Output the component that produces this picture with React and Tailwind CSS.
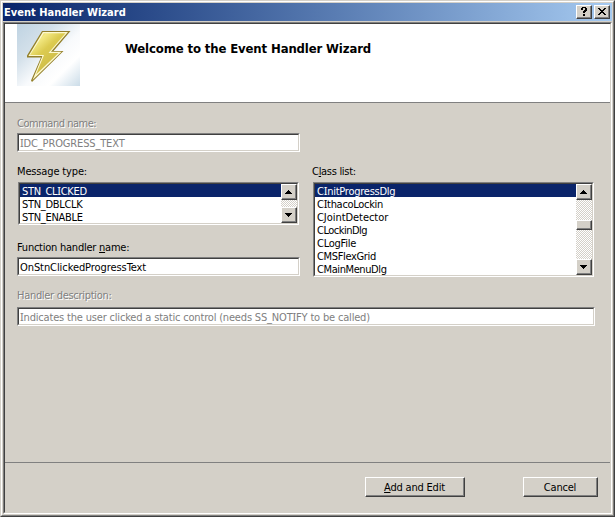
const raised =
  "border border-t-white border-l-white border-r-[#404040] border-b-[#404040] bg-[#d4d0c8]";
const raisedInner = "h-full w-full border-r border-b border-[#808080] flex items-center justify-center";
const sunken = "border border-t-[#808080] border-l-[#808080] border-r-white border-b-white";
const sunkenInner =
  "h-full w-full border border-t-[#404040] border-l-[#404040] border-r-[#d4d0c8] border-b-[#d4d0c8]";

function Serifed({ text }) {
  return text.split(/(I)/).map((part, i) =>
    part === "I" ? (
      <span key={i} className="font-['Noto_Sans',sans-serif] leading-[0] [font-stretch:normal]">
        I
      </span>
    ) : (
      part
    ),
  );
}

function TitleButton({ children, className = "" }) {
  return (
    <button className={`block h-[14px] w-4 ${raised} ${className}`}>
      <span className={raisedInner}>{children}</span>
    </button>
  );
}

function PushButton({ children, className = "" }) {
  return (
    <button className={`block h-5 ${raised} ${className}`}>
      <span className={`${raisedInner} pt-px leading-[13px]`}>{children}</span>
    </button>
  );
}

function Field({ value, disabled, className = "" }) {
  return (
    <div className={`h-[19px] ${sunken}`}>
      <div className={`${sunkenInner} bg-white pt-[2px] pl-px ${disabled ? "text-[#808080]" : "text-black"}`}>
        <span className={`block leading-[13px] ${className}`}>
          <Serifed text={value} />
        </span>
      </div>
    </div>
  );
}

function Label({ children, disabled, className = "" }) {
  return (
    <div
      className={`h-[13px] leading-[15px] ${
        disabled ? "text-[#808080] [text-shadow:1px_1px_0_#fff]" : "text-black"
      } ${className}`}
    >
      {children}
    </div>
  );
}

function ArrowButton({ down }) {
  return (
    <button className={`block h-4 w-4 shrink-0 ${raised}`}>
      <span className={raisedInner}>
        <svg width="7" height="4" viewBox="0 0 7 4" shapeRendering="crispEdges">
          <path d={down ? "M0 0h7v1h-1v1h-1v1h-1v1h-1v-1h-1v-1h-1v-1h-1z" : "M3 0h1v1h1v1h1v1h1v1h-7v-1h1v-1h1v-1h1z"} />
        </svg>
      </span>
    </button>
  );
}

function ListBox({ items, thumb }) {
  return (
    <div className={sunken}>
      <div className={`${sunkenInner} flex bg-white`}>
        <ul className="flex-1">
          {items.map(([name, spacing], i) => (
            <li
              key={name}
              className={`h-[13px] pl-[2px] leading-[15px] ${spacing} ${
                i === 0 ? "bg-[#0a246a] text-white" : "text-black"
              }`}
            >
              <Serifed text={name} />
            </li>
          ))}
        </ul>
        <div className="flex w-4 flex-col justify-between bg-white bg-[repeating-conic-gradient(#d4d0c8_0_25%,#fff_0_50%)] bg-[length:2px_2px]">
          <ArrowButton />
          {thumb && (
            <div className={`mb-[9px] h-[10px] ${raised}`}>
              <div className={raisedInner} />
            </div>
          )}
          <ArrowButton down />
        </div>
      </div>
    </div>
  );
}

function BoltPicture() {
  return (
    <svg width="63" height="62" viewBox="0 0 63 62">
      <defs>
        <linearGradient id="sky" x1="0" y1="0" x2="1" y2="1">
          <stop offset="0" stopColor="#bfd3e2" />
          <stop offset=".3" stopColor="#d3e0ea" />
          <stop offset=".56" stopColor="#f8fafc" />
          <stop offset=".75" stopColor="#fff" />
          <stop offset="1" stopColor="#cbdce8" />
        </linearGradient>
        <linearGradient id="gold" gradientUnits="userSpaceOnUse" x1="14" y1="12" x2="42" y2="44">
          <stop offset="0" stopColor="#cdbb43" />
          <stop offset=".2" stopColor="#f3e983" />
          <stop offset=".45" stopColor="#dccb50" />
          <stop offset=".7" stopColor="#d3c24b" />
          <stop offset="1" stopColor="#c0a936" />
        </linearGradient>
      </defs>
      <rect width="63" height="62" fill="url(#sky)" />
      <path d="M25 7H53.5L36.5 27H46.5L15 58L14 56.5L24 33.5H10V31.5Z" fill="#94802a" />
      <path d="M25.8 8H51L34 27.8H44.6L15.6 56L25.4 32H11.4Z" fill="#fdf9cf" />
      <path d="M26.8 9.2H48.5L31.5 29H41.5L19 50.5L27 31H13Z" fill="url(#gold)" />
    </svg>
  );
}

const messages = [
  ["STN_CLICKED", "tracking-[-0.3px]"],
  ["STN_DBLCLK", "tracking-[-0.3px]"],
  ["STN_ENABLE", "tracking-[-0.3px]"],
];

const classes = [
  ["CInitProgressDlg", "tracking-[-0.25px]"],
  ["CIthacoLockin", "tracking-[-0.3px]"],
  ["CJointDetector", "tracking-[-0.05px]"],
  ["CLockinDlg", "tracking-[-0.5px]"],
  ["CLogFile", "tracking-[-0.25px]"],
  ["CMSFlexGrid", "tracking-[-0.35px]"],
  ["CMainMenuDlg", "tracking-[-0.4px]"],
];

export default function App() {
  return (
    <div className="h-[517px] w-[615px] overflow-hidden whitespace-nowrap border border-t-[#d4d0c8] border-l-[#d4d0c8] border-r-[#404040] border-b-[#404040] bg-[#d4d0c8] font-['DejaVu_Sans_Condensed','DejaVu_Sans',sans-serif] text-[11px] [font-stretch:condensed]">
      <div className="flex h-full flex-col border border-t-white border-l-white border-r-[#808080] border-b-[#808080] p-px">
        <header className="flex h-[18px] shrink-0 items-center bg-linear-to-r from-[#0a246a] to-[#a6caf0] pr-[2px] pl-px">
          <h1 className="flex-1 font-bold leading-[13px] tracking-[0.02px] text-white">Event Handler Wizard</h1>
          <div className="flex gap-[2px]">
            <TitleButton>
              <svg width="6" height="9" viewBox="0 0 6 9" shapeRendering="crispEdges">
                <path d="M1 0h4v1h1v3h-1v1h-1v1h-2v-2h1v-1h1v-2h-2v2h-2v-2h1zM2 7h2v2h-2z" />
              </svg>
            </TitleButton>
            <TitleButton>
              <svg width="8" height="7" viewBox="0 0 8 7" shapeRendering="crispEdges">
                <path d="M0 0h2v1h1v1h2v-1h1v-1h2v1h-1v1h-1v1h-1v1h1v1h1v1h1v1h-2v-1h-1v-1h-2v1h-1v1h-2v-1h1v-1h1v-1h1v-1h-1v-1h-1v-1h-1z" />
              </svg>
            </TitleButton>
          </div>
        </header>
        <div className={`mt-px flex-1 ${sunken}`}>
          <div className={`${sunkenInner} flex flex-col`}>
            <section className="flex h-[79px] shrink-0 items-start border-b border-[#808080] bg-white pl-3">
              <BoltPicture />
              <h2 className="mt-[17px] ml-[45px] text-[13px] leading-4 font-bold tracking-[-0.13px] text-black">
                Welcome to the Event Handler Wizard
              </h2>
            </section>
            <main className="flex h-[359px] shrink-0 flex-col pt-[13px] pr-[15px] pl-3">
              <div className="flex">
                <div className="w-[283px]">
                  <Label disabled className="tracking-[-0.48px]">Command name:</Label>
                  <div className="pt-1">
                    <Field disabled value="IDC_PROGRESS_TEXT" className="tracking-[-0.15px]" />
                  </div>
                  <Label className="mt-[12px] tracking-[-0.15px]">Message type:</Label>
                  <div className="mt-[5px] mr-px ml-px">
                    <ListBox items={messages} />
                  </div>
                  <Label className="mt-[15px] tracking-[-0.24px]">
                    Function handler <u>n</u>ame:
                  </Label>
                  <div className="pt-1">
                    <Field value="OnStnClickedProgressText" className="tracking-[-0.08px]" />
                  </div>
                </div>
                <div className="mt-[48px] ml-3 w-[282px]">
                  <Label className="tracking-[-0.3px]">
                    C<u>l</u>ass list:
                  </Label>
                  <div className="mt-[5px] ml-px">
                    <ListBox items={classes} thumb />
                  </div>
                </div>
              </div>
              <Label disabled className="mt-[11px] tracking-[-0.3px]">Handler description:</Label>
              <div className="pt-[6px]">
                <Field
                  disabled
                  value="Indicates the user clicked a static control (needs SS_NOTIFY to be called)"
                  className="tracking-[-0.18px]"
                />
              </div>
            </main>
            <footer className="flex flex-1 items-start justify-end gap-[58px] border-t border-[#808080] pt-[14px] pr-3">
              <PushButton className="w-[100px] tracking-[-0.2px]">
                <span>
                  <u>A</u>dd and Edit
                </span>
              </PushButton>
              <PushButton className="w-[75px] tracking-[-0.2px]">Cancel</PushButton>
            </footer>
          </div>
        </div>
      </div>
    </div>
  );
}
